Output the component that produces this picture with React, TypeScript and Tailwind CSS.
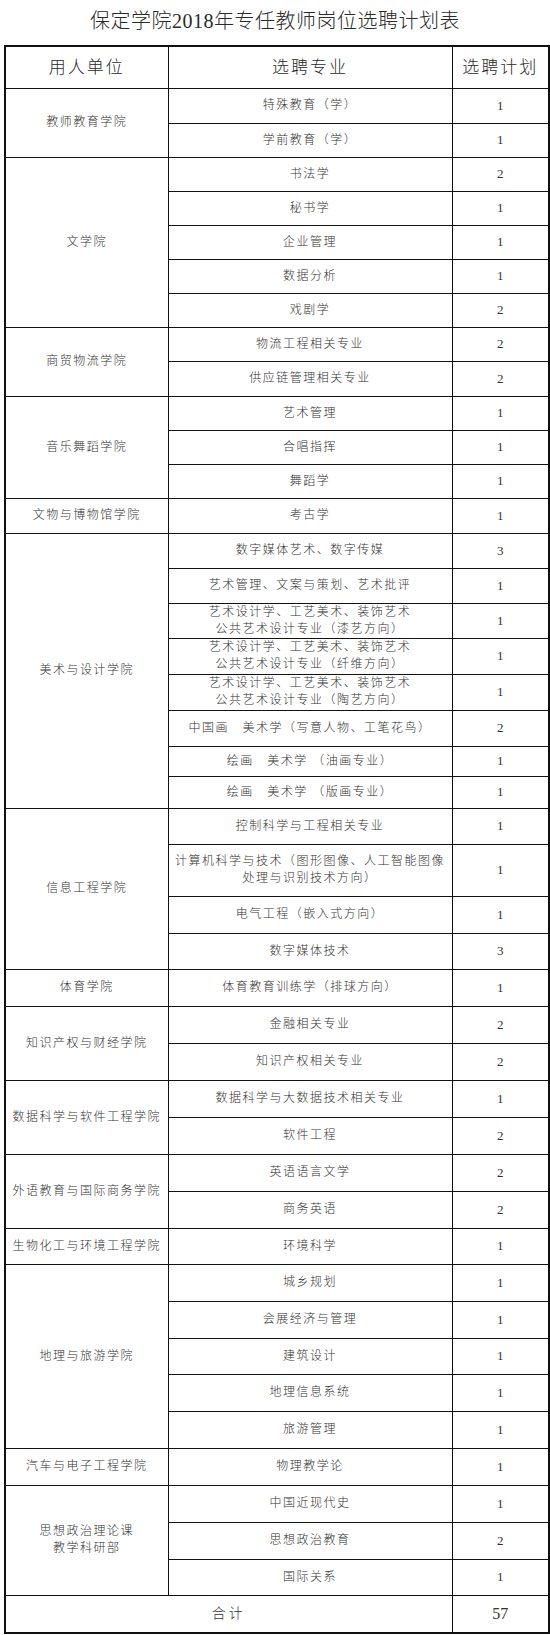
import React from 'react'

type Row = { major: string[]; count: string; h: number }
type Group = { unit: string[]; rows: Row[] }

const r = (major: string | string[], count: string, h: number): Row => ({
  major: Array.isArray(major) ? major : [major],
  count,
  h,
})

const groups: Group[] = [
  { unit: ['教师教育学院'], rows: [r('特殊教育（学）', '1', 35), r('学前教育（学）', '1', 34)] },
  {
    unit: ['文学院'],
    rows: [
      r('书法学', '2', 34),
      r('秘书学', '1', 34),
      r('企业管理', '1', 34),
      r('数据分析', '1', 34),
      r('戏剧学', '2', 34),
    ],
  },
  { unit: ['商贸物流学院'], rows: [r('物流工程相关专业', '2', 34), r('供应链管理相关专业', '2', 35)] },
  {
    unit: ['音乐舞蹈学院'],
    rows: [r('艺术管理', '1', 34), r('合唱指挥', '1', 34), r('舞蹈学', '1', 34)],
  },
  { unit: ['文物与博物馆学院'], rows: [r('考古学', '1', 35)] },
  {
    unit: ['美术与设计学院'],
    rows: [
      r('数字媒体艺术、数字传媒', '3', 35),
      r('艺术管理、文案与策划、艺术批评', '1', 35),
      r(['艺术设计学、工艺美术、装饰艺术', '公共艺术设计专业（漆艺方向）'], '1', 35),
      r(['艺术设计学、工艺美术、装饰艺术', '公共艺术设计专业（纤维方向）'], '1', 36),
      r(['艺术设计学、工艺美术、装饰艺术', '公共艺术设计专业（陶艺方向）'], '1', 36),
      r('中国画　美术学（写意人物、工笔花鸟）', '2', 36),
      r('绘画　美术学 （油画专业）', '1', 30),
      r('绘画　美术学 （版画专业）', '1', 32),
    ],
  },
  {
    unit: ['信息工程学院'],
    rows: [
      r('控制科学与工程相关专业', '1', 36),
      r(['计算机科学与技术（图形图像、人工智能图像', '处理与识别技术方向）'], '1', 52),
      r('电气工程（嵌入式方向）', '1', 37),
      r('数字媒体技术', '3', 36),
    ],
  },
  { unit: ['体育学院'], rows: [r('体育教育训练学（排球方向）', '1', 37)] },
  { unit: ['知识产权与财经学院'], rows: [r('金融相关专业', '2', 37), r('知识产权相关专业', '2', 37)] },
  {
    unit: ['数据科学与软件工程学院'],
    rows: [r('数据科学与大数据技术相关专业', '1', 37), r('软件工程', '2', 37)],
  },
  { unit: ['外语教育与国际商务学院'], rows: [r('英语语言文学', '2', 37), r('商务英语', '2', 37)] },
  { unit: ['生物化工与环境工程学院'], rows: [r('环境科学', '1', 36)] },
  {
    unit: ['地理与旅游学院'],
    rows: [
      r('城乡规划', '1', 37),
      r('会展经济与管理', '1', 37),
      r('建筑设计', '1', 36),
      r('地理信息系统', '1', 37),
      r('旅游管理', '1', 37),
    ],
  },
  { unit: ['汽车与电子工程学院'], rows: [r('物理教学论', '1', 37)] },
  {
    unit: ['思想政治理论课', '教学科研部'],
    rows: [r('中国近现代史', '1', 37), r('思想政治教育', '2', 37), r('国际关系', '1', 36)],
  },
]

const font = { fontFamily: '"Liberation Serif", "Noto Sans CJK SC", serif' }

export default function App() {
  return (
    <div className="w-[550px] h-[1635px] bg-white text-[#333] font-light" style={font}>
      {/* 标题 */}
      <div className="h-[45px] flex items-center justify-center pb-[4px] text-[20px] tracking-[0.5px] text-[#2a2a2a]">
        保定学院2018年专任教师岗位选聘计划表
      </div>

      <table className="ml-[4px] w-[544px] table-fixed border-collapse border-2 border-[#111]">
        <colgroup>
          <col className="w-[163px]" />
          <col className="w-[284px]" />
          <col className="w-[97px]" />
        </colgroup>
        <thead>
          <tr className="h-[42px] text-[17px] tracking-[2px] text-[#2a2a2a]">
            <th className="border border-[#111] font-light p-0">用人单位</th>
            <th className="border border-[#111] font-light p-0">选聘专业</th>
            <th className="border border-[#111] font-light p-0">选聘计划</th>
          </tr>
        </thead>
        <tbody className="text-[12px] tracking-[1.5px]">
          {groups.map((g) =>
            g.rows.map((row, i) => (
              <tr key={g.unit.join('') + i} style={{ height: row.h }}>
                {i === 0 && (
                  <td
                    rowSpan={g.rows.length}
                    className="border border-[#111] p-0 text-center leading-[17px]"
                  >
                    {g.unit.map((u) => (
                      <div key={u}>{u}</div>
                    ))}
                  </td>
                )}
                <td className="border border-[#111] p-0 text-center leading-[17px]">
                  {row.major.map((m) => (
                    <div key={m} className="whitespace-pre">
                      {m}
                    </div>
                  ))}
                </td>
                <td className="border border-[#111] p-0 text-center text-[13px] tracking-normal">
                  {row.count}
                </td>
              </tr>
            ))
          )}
          <tr className="h-[38px]">
            <td colSpan={2} className="border border-[#111] p-0 text-center text-[14px] tracking-[3px]">
              合计
            </td>
            <td className="border border-[#111] p-0 text-center text-[16px] tracking-normal">57</td>
          </tr>
        </tbody>
      </table>
    </div>
  )
}
